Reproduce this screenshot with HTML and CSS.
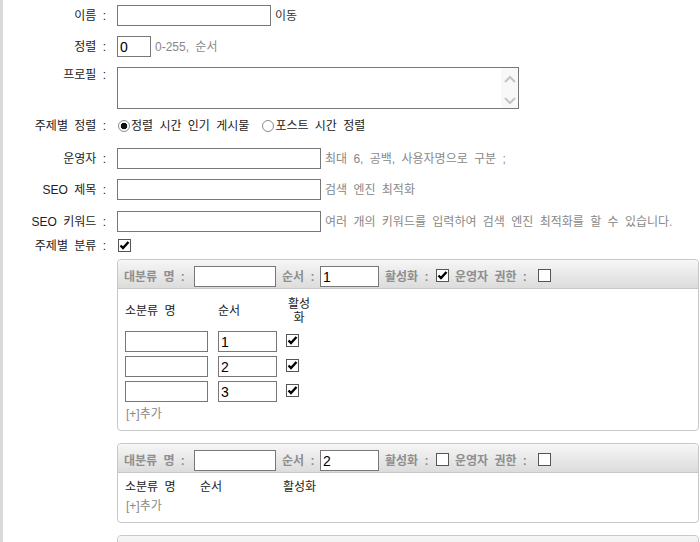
FILE: index.html
```html
<!DOCTYPE html>
<html>
<head>
    <title>게시판 설정</title>
    <link rel="stylesheet" href="styles.css">
</head>
<body>
    <div class="page">
        <div class="row">
            <label class="label">이름 :</label>
            <input type="text" class="input w-name">
            <span class="note dark">이동</span>
        </div>
        <div class="row">
            <label class="label">정렬 :</label>
            <input type="text" class="input w-sort" value="0">
            <span class="note">0-255, 순서</span>
        </div>
        <div class="row top">
            <label class="label">프로필 :</label>
            <div class="profile">
                <textarea></textarea>
                <div class="scroll">
                    <svg width="12" height="8" viewBox="0 0 12 8"><path d="M1 7 L6 2 L11 7" fill="none" stroke="#c4c4c4" stroke-width="2"/></svg>
                    <svg width="12" height="8" viewBox="0 0 12 8"><path d="M1 1 L6 6 L11 1" fill="none" stroke="#c4c4c4" stroke-width="2"/></svg>
                </div>
            </div>
        </div>
        <div class="row radios">
            <label class="label">주제별 정렬 :</label>
            <label class="opt"><input type="radio" name="order" checked>정렬 시간 인기 게시물</label>
            <label class="opt second"><input type="radio" name="order">포스트 시간 정렬</label>
        </div>
        <div class="row">
            <label class="label">운영자 :</label>
            <input type="text" class="input w-long">
            <span class="note">최대 6, 공백, 사용자명으로 구분 ;</span>
        </div>
        <div class="row gap11">
            <label class="label">SEO 제목 :</label>
            <input type="text" class="input w-long">
            <span class="note">검색 엔진 최적화</span>
        </div>
        <div class="row gap7">
            <label class="label">SEO 키워드 :</label>
            <input type="text" class="input w-long">
            <span class="note">여러 개의 키워드를 입력하여 검색 엔진 최적화를 할 수 있습니다.</span>
        </div>
        <div class="row check-row">
            <label class="label">주제별 분류 :</label>
            <input type="checkbox" class="check" checked>
        </div>

        <div class="cat-box">
            <div class="cat-head">
                <span class="hd hd-name">대분류 명 :</span>
                <input type="text" class="input w-cat">
                <span class="hd hd-order">순서 :</span>
                <input type="text" class="input w-num" value="1">
                <span class="hd hd-on">활성화 :</span>
                <input type="checkbox" class="check" checked>
                <span class="hd hd-admin">운영자 권한 :</span>
                <input type="checkbox" class="check">
            </div>
            <div class="cat-body">
                <table class="sub-table filled">
                    <tr>
                        <th class="c1">소분류 명</th>
                        <th class="c2">순서</th>
                        <th class="c3">활성화</th>
                    </tr>
                    <tr>
                        <td><input type="text" class="input w-sub"></td>
                        <td><input type="text" class="input w-num" value="1"></td>
                        <td><input type="checkbox" class="check" checked></td>
                    </tr>
                    <tr>
                        <td><input type="text" class="input w-sub"></td>
                        <td><input type="text" class="input w-num" value="2"></td>
                        <td><input type="checkbox" class="check" checked></td>
                    </tr>
                    <tr>
                        <td><input type="text" class="input w-sub"></td>
                        <td><input type="text" class="input w-num" value="3"></td>
                        <td><input type="checkbox" class="check" checked></td>
                    </tr>
                </table>
                <a class="add">[+]추가</a>
            </div>
        </div>

        <div class="cat-box">
            <div class="cat-head">
                <span class="hd hd-name">대분류 명 :</span>
                <input type="text" class="input w-cat">
                <span class="hd hd-order">순서 :</span>
                <input type="text" class="input w-num" value="2">
                <span class="hd hd-on">활성화 :</span>
                <input type="checkbox" class="check">
                <span class="hd hd-admin">운영자 권한 :</span>
                <input type="checkbox" class="check">
            </div>
            <div class="cat-body short">
                <table class="sub-table empty">
                    <tr>
                        <th class="c1">소분류 명</th>
                        <th class="c2">순서</th>
                        <th class="c3">활성화</th>
                    </tr>
                </table>
                <a class="add">[+]추가</a>
            </div>
        </div>

        <div class="cat-box">
            <div class="cat-head">
                <span class="hd hd-name">대분류 명 :</span>
                <input type="text" class="input w-cat">
                <span class="hd hd-order">순서 :</span>
                <input type="text" class="input w-num" value="3">
                <span class="hd hd-on">활성화 :</span>
                <input type="checkbox" class="check">
                <span class="hd hd-admin">운영자 권한 :</span>
                <input type="checkbox" class="check">
            </div>
            <div class="cat-body short">
                <table class="sub-table empty">
                    <tr>
                        <th class="c1">소분류 명</th>
                        <th class="c2">순서</th>
                        <th class="c3">활성화</th>
                    </tr>
                </table>
                <a class="add">[+]추가</a>
            </div>
        </div>
    </div>
</body>
</html>
```

FILE: styles.css
```css
body {
    margin: 0;
    padding: 0;
    background: #fff;
    font-family: "Liberation Sans", "Noto Sans CJK KR", sans-serif;
    font-size: 12px;
    line-height: 14px;
    word-spacing: 3px;
    color: #222;
    overflow: hidden;
}
.page {
    border-left: 3px solid #dadada;
    padding-top: 5px;
    min-height: 542px;
}
.row {
    display: flex;
    align-items: center;
    margin-bottom: 10px;
}
.row.top {
    align-items: flex-start;
}
.row.gap11 {
    margin-bottom: 11px;
}
.row.gap7 {
    margin-bottom: 7px;
}
.label {
    width: 103px;
    margin-right: 11px;
    text-align: right;
    flex-shrink: 0;
    white-space: nowrap;
}
.row.top .label {
    margin-top: 1px;
}
.input {
    box-sizing: border-box;
    height: 21px;
    margin: 0;
    padding: 0 2px;
    border: 1px solid #777;
    background: #fff;
    font-family: "Liberation Sans", sans-serif;
    font-size: 14px;
    color: #000;
    outline: none;
}
.w-name { width: 154px; }
.w-sort { width: 34px; }
.w-long { width: 204px; }
.w-cat { width: 82px; }
.w-num { width: 59px; }
.w-sub { width: 83px; }
.note {
    margin-left: 4px;
    color: #888;
    white-space: nowrap;
}
.note.dark {
    color: #333;
}

/* textarea with the old style scrollbar */
.profile {
    display: flex;
    width: 402px;
    height: 42px;
    box-sizing: border-box;
    border: 1px solid #777;
}
.profile textarea {
    flex: 1;
    border: none;
    margin: 0;
    padding: 0;
    resize: none;
    outline: none;
}
.scroll {
    width: 17px;
    background: #f8f8f8;
    display: flex;
    flex-direction: column;
    align-items: center;
    justify-content: space-between;
    padding: 7px 0 3px;
}
.scroll svg {
    display: block;
}

.radios {
    height: 13px;
    margin-top: 10px;
    margin-bottom: 16px;
}
.opt {
    display: flex;
    align-items: center;
    white-space: nowrap;
}
.opt.second {
    margin-left: 12px;
}
.opt input {
    appearance: none;
    -webkit-appearance: none;
    width: 12px;
    height: 12px;
    margin: 0 1px;
    border: 1px solid #8a8a8a;
    border-radius: 50%;
    background: #fff;
}
.opt input:checked {
    background: radial-gradient(circle, #111 0, #111 3px, #fff 3.6px);
}

.check {
    appearance: none;
    -webkit-appearance: none;
    box-sizing: border-box;
    width: 13px;
    height: 13px;
    margin: 0;
    border: 1px solid #555;
    background: #fff;
    flex-shrink: 0;
}
.check:checked {
    background: #fff url("data:image/svg+xml,%3Csvg xmlns='http://www.w3.org/2000/svg' width='11' height='11' viewBox='0 0 11 11'%3E%3Cpath d='M1.5 5.5 L4 8 L9.5 2' fill='none' stroke='%23000' stroke-width='2.4'/%3E%3C/svg%3E") no-repeat center;
}
.check-row {
    height: 13px;
    margin-bottom: 7px;
}
.check-row .check {
    margin-left: 1px;
}

/* category boxes */
.cat-box {
    margin: 0 1px 12px 114px;
    border: 1px solid #c8c8c8;
    border-radius: 4px;
}
.cat-head {
    display: flex;
    align-items: flex-end;
    height: 27px;
    padding: 0 0 1px 6px;
    border-bottom: 1px solid #c8c8c8;
    border-radius: 4px 4px 0 0;
    background: linear-gradient(#f6f6f6, #dcdcdc);
}
.cat-head .check {
    margin-bottom: 5px;
}
.hd {
    font-weight: bold;
    color: #8e8e8e;
    white-space: nowrap;
    margin-bottom: 3px;
}
.hd-name { width: 70px; }
.hd-order { width: 38px; margin-left: 6px; }
.hd-on { width: 51px; margin-left: 6px; }
.hd-admin { width: 83px; margin-left: 6px; }
.cat-body {
    padding: 3px 4px 9px;
}
.cat-body.short {
    padding-top: 4px;
}
.sub-table {
    border-spacing: 2px;
    table-layout: fixed;
}
.sub-table th {
    font-weight: normal;
    color: #222;
    text-align: left;
    padding: 1px;
}
.sub-table td {
    padding: 1px;
    vertical-align: top;
}
.sub-table td .input {
    display: block;
}
.sub-table td .check {
    display: block;
    margin: 3px 0 0 2px;
}
.filled th {
    padding: 3px 1px;
}
.filled .c1 { width: 89px; }
.filled .c2 { width: 62px; }
.filled .c3 { width: 30px; text-align: center; word-spacing: 0; }
.empty .c1 { width: 71px; }
.empty .c2 { width: 79px; }
.empty .c3 { width: 60px; }
.add {
    display: block;
    margin-top: 2px;
    padding-left: 4px;
    color: #888;
}
```
